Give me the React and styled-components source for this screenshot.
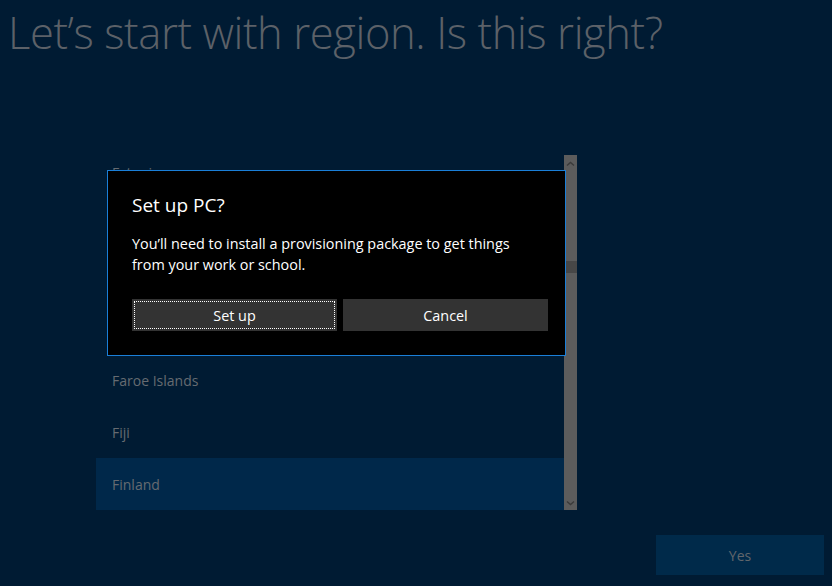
import React, { useEffect, useRef } from 'react';
import styled, { createGlobalStyle } from 'styled-components';

const GlobalStyle = createGlobalStyle`
    html, body {
        margin: 0;
        padding: 0;
        background: #001b33;
    }
    * {
        box-sizing: border-box;
    }
`

const regions = ['Eritrea', 'Estonia', 'Eswatini', 'Ethiopia', 'Falkland Islands', 'Faroe Islands', 'Fiji', 'Finland', 'France', 'French Guiana']

const Chevron = ({ down }) => (
    <svg width="9" height="6" viewBox="0 0 9 6">
        <path
            d={down ? 'M1 1.5 L4.5 4.5 L8 1.5' : 'M1 4.5 L4.5 1.5 L8 4.5'}
            fill="none"
            stroke="#3a3a3a"
            strokeWidth="1.4"
        />
    </svg>
)

const App = () => {
    const listRef = useRef(null);

    useEffect(() => {
        // the list sits scrolled a little past "Eritrea"
        if (listRef.current) listRef.current.scrollTop = 52 + 9;
    }, []);

    return (
        <Page>
            <GlobalStyle />
            <Title>Let’s start with region. Is this right?</Title>
            <ListArea>
                <List ref={listRef}>
                    {regions.map(r => (
                        <Item key={r} selected={r === 'Finland'}>{r}</Item>
                    ))}
                </List>
                <ScrollBar>
                    <Chevron />
                    <Track>
                        <Thumb />
                    </Track>
                    <Chevron down />
                </ScrollBar>
            </ListArea>
            <Footer>
                <YesButton>Yes</YesButton>
            </Footer>

            <Dialog>
                <h2>Set up PC?</h2>
                <p>You’ll need to install a provisioning package to get things from your work or school.</p>
                <Buttons>
                    <DialogButton focused>Set up</DialogButton>
                    <DialogButton>Cancel</DialogButton>
                </Buttons>
            </Dialog>
        </Page>
    )
}

const Page = styled.div`
    position: relative;
    width: 832px;
    height: 586px;
    overflow: hidden;
    display: flex;
    flex-direction: column;
    font-family: "Open Sans", "Noto Sans", sans-serif;
`

const Title = styled.h1`
    margin: 5px 0 0 8px;
    font-size: 43.5px;
    line-height: 56px;
    font-weight: 300;
    color: #5c6168;
    letter-spacing: -0.4px;
    white-space: nowrap;
`

const ListArea = styled.div`
    margin: 94px 0 0 96px;
    width: 481px;
    height: 355px;
    display: flex;
`

const List = styled.ul`
    flex: 1;
    margin: 0;
    padding: 0;
    list-style: none;
    overflow: hidden;
`

const Item = styled.li`
    height: 52px;
    padding: 0 16px;
    display: flex;
    align-items: center;
    font-size: 14px;
    color: #666b71;
    background: ${p => p.selected ? '#00284a' : 'transparent'};
`

const ScrollBar = styled.div`
    width: 13px;
    background: #5c5c5c;
    display: flex;
    flex-direction: column;
    align-items: center;
    padding: 6px 0 4px;
    gap: 2px;
`

const Track = styled.div`
    flex: 1;
    align-self: stretch;
    padding-top: 92px;
`

const Thumb = styled.div`
    height: 12px;
    background: #474747;
`

const Footer = styled.div`
    margin-top: 25px;
    display: flex;
    justify-content: flex-end;
    padding-right: 8px;
`

const YesButton = styled.div`
    width: 168px;
    height: 40px;
    background: #002a4a;
    color: #61666c;
    font-size: 14px;
    display: flex;
    align-items: center;
    justify-content: center;
`

const Dialog = styled.div`
    position: absolute;
    left: 107px;
    top: 170px;
    width: 459px;
    height: 186px;
    background: #000;
    border: 1px solid #1a7fd8;
    padding: 21px 16px 0 24px;
    color: #fff;
    h2 {
        margin: 0;
        font-size: 19px;
        font-weight: 400;
        line-height: 26px;
    }
    p {
        margin: 15px 0 0;
        font-size: 14.4px;
        line-height: 21px;
        max-width: 400px;
    }
`

const Buttons = styled.div`
    display: flex;
    gap: 6px;
    margin-top: 24px;
    width: 416px;
`

const DialogButton = styled.div`
    flex: 1;
    height: 32px;
    background: #333;
    color: #fff;
    font-size: 14.4px;
    display: flex;
    align-items: center;
    justify-content: center;
    outline: ${p => p.focused ? '1px dotted #fff' : 'none'};
    outline-offset: -3px;
`

export default App;
